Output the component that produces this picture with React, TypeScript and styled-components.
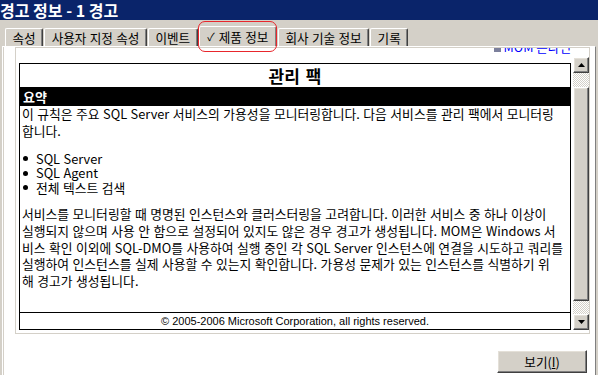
import React from 'react';
import styled, { createGlobalStyle } from 'styled-components';

const GlobalStyle = createGlobalStyle`
  html, body {
    margin: 0;
    padding: 0;
    background: #d4d0c8;
  }
  body {
    font-family: "Noto Sans CJK KR", "Noto Sans", sans-serif;
  }
`;

const Window = styled.div`
  position: relative;
  width: 598px;
  height: 375px;
  overflow: hidden;
  background: #d4d0c8;
  display: flex;
  flex-direction: column;
  font-size: 12px;
  color: #000;
`;

const TitleBar = styled.div`
  height: 20px;
  flex: none;
  background: #0a246a;
  color: #fff;
  font-weight: bold;
  font-size: 16px;
  line-height: 20px;
  white-space: nowrap;
`;

const TabStrip = styled.div`
  height: 26px;
  flex: none;
  display: flex;
  align-items: flex-end;
  padding-left: 5px;
  gap: 1px;
`;

const Tab = styled.div<{ $active?: boolean }>`
  box-sizing: border-box;
  height: ${p => (p.$active ? 20 : 18)}px;
  padding: 0 ${p => (p.$active ? 7.5 : 6.5)}px 1px;
  display: flex;
  align-items: center;
  border-top: 1px solid #fff;
  border-left: 1px solid #fff;
  border-right: 1px solid #404040;
  box-shadow: inset -1px 0 #808080;
  border-radius: 2px 2px 0 0;
  font-size: 12.6px;
  word-spacing: 0.5px;
  white-space: nowrap;
`;

const Check = styled.span`
  margin-right: 4px;
  font-size: 11px;
`;

const Panel = styled.div`
  flex: 1;
  margin: 0 2px;
  background: #fff;
  border-top: 1px solid #fff;
  border-left: 1px solid #fff;
  border-right: 1px solid #808080;
  box-shadow: inset 1px 0 #d4d0c8;
  padding: 0 5px 0 12px;
  display: flex;
  flex-direction: column;
`;

const Browser = styled.div`
  box-sizing: border-box;
  height: 287px;
  flex: none;
  border: 1px solid #d4d0c8;
  display: flex;
`;

const DocArea = styled.div`
  flex: 1;
  overflow: hidden;
  padding: 0 2px 0 3px;
`;

const LinkLine = styled.div`
  margin-top: -8px;
  height: 14px;
  line-height: 14px;
  display: flex;
  justify-content: flex-end;
  align-items: center;
  gap: 3px;
  color: #0000ff;
  font-size: 12.6px;
  white-space: nowrap;
`;

const LinkIcon = styled.span`
  width: 7px;
  height: 8px;
  margin-top: 2px;
  background: #7c809c;
`;

const DocBox = styled.div`
  box-sizing: border-box;
  margin-top: 9px;
  height: 267px;
  border: 1px solid #000;
  display: flex;
  flex-direction: column;
`;

const Heading = styled.div`
  height: 23px;
  line-height: 23px;
  text-align: center;
  font-size: 17px;
  font-weight: bold;
  word-spacing: 2px;
`;

const SectionBar = styled.div`
  height: 19px;
  line-height: 19px;
  background: #000;
  color: #fff;
  font-weight: bold;
  font-size: 13px;
  padding-left: 3px;
`;

const Body = styled.div`
  flex: 1;
  padding: 0 2px;
  font-size: 12.8px;
  word-spacing: 0.6px;
  white-space: nowrap;
`;

const Para = styled.p<{ $top: number }>`
  margin: ${p => p.$top}px 0 0;
  line-height: 16.8px;
`;

const List = styled.ul`
  margin: 12px 0 0;
  padding: 0;
  list-style: none;
`;

const Item = styled.li`
  height: 14.5px;
  line-height: 14.5px;
  display: flex;
  align-items: center;
  &::before {
    content: "";
    width: 5px;
    height: 5px;
    border-radius: 50%;
    background: #000;
    margin: 0 8px 0 1px;
  }
`;

const Footer = styled.div`
  height: 16px;
  border-top: 1px solid #000;
  text-align: center;
  font-family: "Liberation Sans", Arial, sans-serif;
  font-size: 11px;
  line-height: 16px;
`;

const ScrollBar = styled.div`
  width: 16px;
  flex: none;
  margin: 9px 0 3px;
  display: flex;
  flex-direction: column;
`;

const Bevel = styled.div`
  box-sizing: border-box;
  background: #d4d0c8;
  border: 1px solid;
  border-color: #fff #404040 #404040 #fff;
  box-shadow: inset -1px -1px #808080, inset 1px 1px #e4e0d8;
`;

const ArrowButton = styled(Bevel)`
  height: 16px;
  flex: none;
  display: flex;
  align-items: center;
  justify-content: center;
`;

const Track = styled.div<{ $h: number }>`
  height: ${p => p.$h}px;
  flex: none;
  background: repeating-conic-gradient(#fff 0 25%, #d4d0c8 0 50%) 0 0 / 2px 2px;
`;

const Thumb = styled(Bevel)`
  flex: 1;
`;

const ButtonRow = styled.div`
  margin-top: 16px;
  display: flex;
  justify-content: flex-end;
  padding-right: 3px;
`;

const PushButton = styled(Bevel)`
  width: 90px;
  height: 23px;
  display: flex;
  align-items: center;
  justify-content: center;
  font-size: 12.6px;
`;

const Key = styled.span`
  text-decoration: underline;
`;

const Annotation = styled.div`
  position: absolute;
  left: 198px;
  top: 21px;
  width: 79px;
  height: 31px;
  box-sizing: border-box;
  border: 1px solid #e8262c;
  border-radius: 7px;
  pointer-events: none;
`;

const Arrow = ({ up }: { up?: boolean }) => (
  <svg width="7" height="4" viewBox="0 0 7 4">
    <polygon points={up ? '3.5,0 7,4 0,4' : '0,0 7,0 3.5,4'} fill="#000" />
  </svg>
);

const tabs = ['속성', '사용자 지정 속성', '이벤트', '제품 정보', '회사 기술 정보', '기록'];

export default function App() {
  return (
    <>
      <GlobalStyle />
      <Window>
        <TitleBar>경고 정보 - 1 경고</TitleBar>
        <TabStrip>
          {tabs.map(t => (
            <Tab key={t} $active={t === '제품 정보'}>
              {t === '제품 정보' && <Check>✓</Check>}
              {t}
            </Tab>
          ))}
        </TabStrip>
        <Panel>
          <Browser>
            <DocArea>
              <LinkLine>
                <LinkIcon />
                MOM 온라인
              </LinkLine>
              <DocBox>
                <Heading>관리 팩</Heading>
                <SectionBar>요약</SectionBar>
                <Body>
                  <Para $top={0}>
                    이 규칙은 주요 SQL Server 서비스의 가용성을 모니터링합니다. 다음 서비스를 관리 팩에서 모니터링
                    <br />
                    합니다.
                  </Para>
                  <List>
                    <Item>SQL Server</Item>
                    <Item>SQL Agent</Item>
                    <Item>전체 텍스트 검색</Item>
                  </List>
                  <Para $top={11}>
                    서비스를 모니터링할 때 명명된 인스턴스와 클러스터링을 고려합니다. 이러한 서비스 중 하나 이상이
                    <br />
                    실행되지 않으며 사용 안 함으로 설정되어 있지도 않은 경우 경고가 생성됩니다. MOM은 Windows 서
                    <br />
                    비스 확인 이외에 SQL-DMO를 사용하여 실행 중인 각 SQL Server 인스턴스에 연결을 시도하고 쿼리를
                    <br />
                    실행하여 인스턴스를 실제 사용할 수 있는지 확인합니다. 가용성 문제가 있는 인스턴스를 식별하기 위
                    <br />
                    해 경고가 생성됩니다.
                  </Para>
                </Body>
                <Footer>© 2005-2006 Microsoft Corporation, all rights reserved.</Footer>
              </DocBox>
            </DocArea>
            <ScrollBar>
              <ArrowButton>
                <Arrow up />
              </ArrowButton>
              <Track $h={14} />
              <Thumb />
              <Track $h={13} />
              <ArrowButton>
                <Arrow />
              </ArrowButton>
            </ScrollBar>
          </Browser>
          <ButtonRow>
            <PushButton>
              보기(<Key>I</Key>)
            </PushButton>
          </ButtonRow>
        </Panel>
        <Annotation />
      </Window>
    </>
  );
}
